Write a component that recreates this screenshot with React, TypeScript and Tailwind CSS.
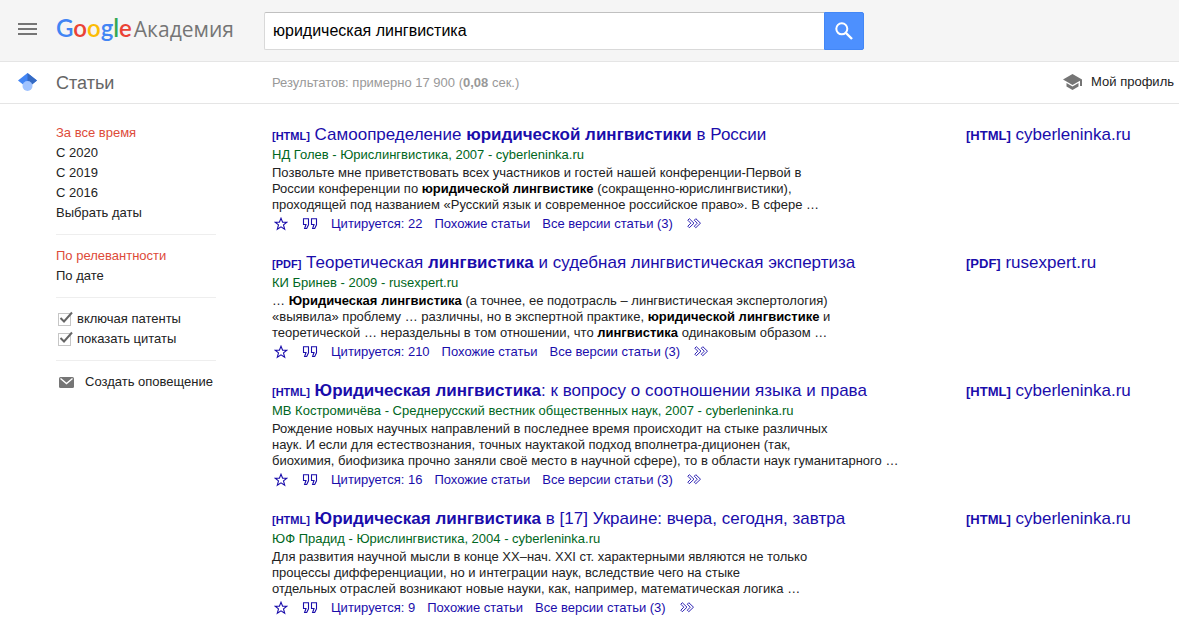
import type { ReactNode } from "react";

type Result = {
  tag: string;
  title: ReactNode;
  byline: string;
  snippet: ReactNode[];
  cited: number;
  site: string;
};

const results: Result[] = [
  {
    tag: "[HTML]",
    title: <>Самоопределение <b>юридической лингвистики</b> в России</>,
    byline: "НД Голев - Юрислингвистика, 2007 - cyberleninka.ru",
    snippet: [
      "Позвольте мне приветствовать всех участников и гостей нашей конференции-Первой в",
      <>России конференции по <b className="text-black">юридической лингвистике</b> (сокращенно-юрислингвистики),</>,
      "проходящей под названием «Русский язык и современное российское право». В сфере …",
    ],
    cited: 22,
    site: "cyberleninka.ru",
  },
  {
    tag: "[PDF]",
    title: <>Теоретическая <b>лингвистика</b> и судебная лингвистическая экспертиза</>,
    byline: "КИ Бринев - 2009 - rusexpert.ru",
    snippet: [
      <>… <b className="text-black">Юридическая лингвистика</b> (а точнее, ее подотрасль – лингвистическая экспертология)</>,
      <>«выявила» проблему … различны, но в экспертной практике, <b className="text-black">юридической лингвистике</b> и</>,
      <>теоретической … нераздельны в том отношении, что <b className="text-black">лингвистика</b> одинаковым образом …</>,
    ],
    cited: 210,
    site: "rusexpert.ru",
  },
  {
    tag: "[HTML]",
    title: <><b>Юридическая лингвистика</b>: к вопросу о соотношении языка и права</>,
    byline: "МВ Костромичёва - Среднерусский вестник общественных наук, 2007 - cyberleninka.ru",
    snippet: [
      "Рождение новых научных направлений в последнее время происходит на стыке различных",
      "наук. И если для естествознания, точных науктакой подход вполнетра-диционен (так,",
      "биохимия, биофизика прочно заняли своё место в научной сфере), то в области наук гуманитарного …",
    ],
    cited: 16,
    site: "cyberleninka.ru",
  },
  {
    tag: "[HTML]",
    title: <><b>Юридическая лингвистика</b> в [17] Украине: вчера, сегодня, завтра</>,
    byline: "ЮФ Прадид - Юрислингвистика, 2004 - cyberleninka.ru",
    snippet: [
      "Для развития научной мысли в конце XX–нач. XXI ст. характерными являются не только",
      "процессы дифференциации, но и интеграции наук, вследствие чего на стыке",
      "отдельных отраслей возникают новые науки, как, например, математическая логика …",
    ],
    cited: 9,
    site: "cyberleninka.ru",
  },
];

function Logo() {
  return (
    <a href="#" className="flex items-baseline gap-0.5 whitespace-nowrap">
      <span className="font-['Lato',sans-serif] text-2xl leading-8 font-semibold">
        <span className="text-[#4285f4]">G</span>
        <span className="text-[#ea4335]">o</span>
        <span className="text-[#fbbc05]">o</span>
        <span className="text-[#4285f4]">g</span>
        <span className="text-[#34a853]">l</span>
        <span className="text-[#ea4335]">e</span>
      </span>
      <span className="font-['Open_Sans',sans-serif] text-[21px] leading-8 text-[#757575]">Академия</span>
    </a>
  );
}

function Header() {
  return (
    <header className="flex h-[62px] items-center border-b border-[#e5e5e5] bg-[#f5f5f5]">
      <button type="button" aria-label="Меню" className="flex w-14 shrink-0 pb-1 pl-[18px]">
        <svg width="19" height="12" viewBox="0 0 19 12" fill="#757575">
          <path d="M0 0h19v2H0zM0 5h19v2H0zM0 10h19v2H0z" />
        </svg>
      </button>
      <div className="w-52 shrink-0 pb-1">
        <Logo />
      </div>
      <form className="flex h-[38px] w-[600px]">
        <input
          type="text"
          aria-label="Поиск"
          defaultValue="юридическая лингвистика"
          className="min-w-0 flex-1 rounded-l-xs border border-r-0 border-[#d9d9d9] border-t-[#c0c0c0] bg-white px-2 text-base text-black outline-none"
        />
        <button
          type="submit"
          aria-label="Найти"
          className="flex w-10 items-center justify-center rounded-r-xs border border-[#4387f5] bg-[#4d90fe]"
        >
          <svg width="18" height="18" viewBox="0 0 18 18" fill="none" stroke="#fff" strokeWidth="2">
            <circle cx="6.8" cy="6.8" r="5.5" />
            <path d="M11 11l6 6" strokeWidth="2.4" />
          </svg>
        </button>
      </form>
    </header>
  );
}

function SubHeader() {
  return (
    <div className="flex h-[42px] items-center border-b border-[#e5e5e5]">
      <div className="w-14 shrink-0 pl-[18px]">
        <svg width="19" height="19" viewBox="0 0 19 19">
          <path d="M9.5 0L0 7.6l5 4h9l5-4z" fill="#4285f4" />
          <path d="M9.5 0L19 7.6l-5 4L9.5 8z" fill="#356ac3" />
          <circle cx="9.5" cy="13" r="5" fill="#a0c3ff" />
        </svg>
      </div>
      <h1 className="w-[216px] shrink-0 text-lg text-[#666]">Статьи</h1>
      <div className="flex-1 text-[#999]">
        Результатов: примерно 17 900 (<b>0,08</b> сек.)
      </div>
      <a href="#" className="flex items-center gap-2 pr-[5px] pb-0.5 text-[#222]">
        <svg width="20" height="18" viewBox="0 0 20 18" fill="#757575">
          <path d="M9.5 1L0 6.5 9.5 12l7.5-4.3V13h2V6.5z" />
          <path d="M3.5 10v3.6L9.5 17l6-3.4V10l-6 3.4z" />
        </svg>
        Мой профиль
      </a>
    </div>
  );
}

function Check({ label }: { label: string }) {
  return (
    <label className="flex items-center gap-1.5 pl-0.5">
      <span className="relative flex">
        <input type="checkbox" defaultChecked className="peer size-[13px] appearance-none border border-[#c6c6c6] bg-white" />
        <svg
          className="absolute left-0 -top-0.5 hidden peer-checked:block"
          width="15"
          height="14"
          viewBox="0 0 15 14"
          fill="none"
          stroke="#666"
          strokeWidth="2"
        >
          <path d="M2.5 7l3.5 3.5L14 1.5" />
        </svg>
      </span>
      {label}
    </label>
  );
}

function Sidebar() {
  return (
    <nav className="w-40 shrink-0 leading-5 text-[#222]">
      <ul className="border-b border-[#eee] pb-[11px]">
        <li><a href="#" className="text-[#dd4b39]">За все время</a></li>
        <li><a href="#">С 2020</a></li>
        <li><a href="#">С 2019</a></li>
        <li><a href="#">С 2016</a></li>
        <li><a href="#">Выбрать даты</a></li>
      </ul>
      <ul className="border-b border-[#eee] py-[11px]">
        <li><a href="#" className="text-[#dd4b39]">По релевантности</a></li>
        <li><a href="#">По дате</a></li>
      </ul>
      <div className="border-b border-[#eee] py-[11px]">
        <Check label="включая патенты" />
        <Check label="показать цитаты" />
      </div>
      <a href="#" className="flex items-center gap-[11px] pt-[11px] pl-[3px] whitespace-nowrap">
        <svg width="15" height="11" viewBox="0 0 15 11">
          <rect width="15" height="11" rx="1.5" fill="#757575" />
          <path d="M1.5 1.5l6 5 6-5" fill="none" stroke="#fff" strokeWidth="1.4" />
        </svg>
        Создать оповещение
      </a>
    </nav>
  );
}

function ResultItem({ item }: { item: Result }) {
  return (
    <article className="flex h-32 whitespace-nowrap">
      <div className="min-w-0 flex-1">
        <h3 className="text-[17px] leading-[22px] text-[#1a0dab]">
          <span className="text-[11px] font-bold">{item.tag}</span> <a href="#">{item.title}</a>
        </h3>
        <div className="leading-4 text-[#006621]">{item.byline}</div>
        <div className="pt-0.5 leading-4 text-[#222]">
          {item.snippet.map((line, i) => (
            <div key={i}>{line}</div>
          ))}
        </div>
        <div className="flex items-center gap-3 pt-px pl-0.5 leading-5 text-[#1a0dab]">
          <button type="button" aria-label="Сохранить" className="mr-0.5">
            <svg width="14" height="14" viewBox="0 0 14 14" fill="none" stroke="currentColor" strokeWidth="1.1">
              <path d="M7 1.2l1.6 4h4.2L9.5 7.9l1.2 4.3L7 9.8l-3.7 2.4 1.2-4.3L1.2 5.2h4.2z" />
            </svg>
          </button>
          <button type="button" aria-label="Цитировать">
            <svg width="17" height="12" viewBox="0 0 17 12" fill="none" stroke="currentColor" strokeWidth="1.1">
              <path d="M1.5 .8h5v6L4.7 10.5H2.6L4 6.5H1.5zM9.5 .8h5v6l-1.8 3.7h-2.1l1.4-4H9.5z" />
            </svg>
          </button>
          <a href="#">Цитируется: {item.cited}</a>
          <a href="#">Похожие статьи</a>
          <a href="#">Все версии статьи (3)</a>
          <button type="button" aria-label="Ещё" className="pl-0.5">
            <svg width="15" height="12" viewBox="0 0 15 12" fill="none" stroke="currentColor" strokeWidth="0.9">
              <path d="M.8 2.2L2.3.7 7 5.2 2.3 9.7.8 8.2l3-3zM7.3 2.2L8.8.7l4.7 4.5-4.7 4.5-1.5-1.5 3-3z" />
            </svg>
          </button>
        </div>
      </div>
      <a href="#" className="w-[213px] shrink-0 text-[17px] leading-[22px] text-[#1a0dab]">
        <span className="text-[13px] font-bold">{item.tag}</span> {item.site}
      </a>
    </article>
  );
}

export default function App() {
  return (
    <div className="bg-white font-['Liberation_Sans',Arial,sans-serif] text-[13px]">
      <Header />
      <SubHeader />
      <div className="flex gap-14 pt-[19px] pl-14">
        <Sidebar />
        <main className="min-w-0 flex-1 pt-px">
          {results.map((item) => (
            <ResultItem key={item.byline} item={item} />
          ))}
        </main>
      </div>
    </div>
  );
}
